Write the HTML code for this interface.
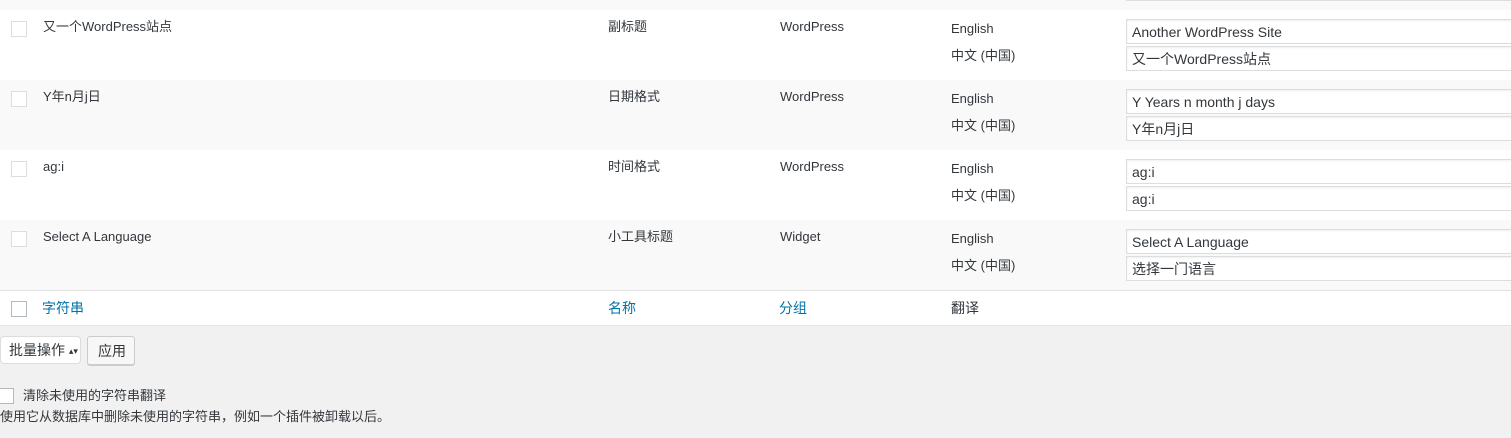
<!DOCTYPE html>
<html><head><meta charset="utf-8"><style>
*{margin:0;padding:0;box-sizing:border-box}
body{width:1511px;height:438px;background:#f1f1f1;font-family:"Liberation Sans","Noto Sans CJK SC",sans-serif;font-size:13px;line-height:16px;color:#32373c;position:relative;overflow:hidden}
.a{position:absolute;white-space:nowrap;line-height:16px}
.row{position:absolute;left:0;width:1511px;height:70px}
.cb{position:absolute;width:16px;height:16px;border:1px solid #ddd;background:#fff}
.inp{position:absolute;left:1126px;width:400px;height:25px;border:1px solid #ddd;background:#fff;font-size:14px;line-height:16px;padding:4px 5px;color:#32373c;box-shadow:inset 0 1px 2px rgba(0,0,0,.07);white-space:nowrap}
.blue{color:#0073aa;font-size:14px}
</style></head><body>
<div class="row" style="top:0;height:10px;background:#f9f9f9"></div>
<div class="inp" style="top:-24px"></div>
<div class="row" style="top:10px;background:#fff"></div>
<div class="row" style="top:80px;background:#f9f9f9"></div>
<div class="row" style="top:150px;background:#fff"></div>
<div class="row" style="top:220px;background:#f9f9f9"></div>
<div class="row" style="top:290px;height:36px;background:#fff;border-top:1px solid #e1e1e1;border-bottom:1px solid #e5e5e5"></div>

<div class="cb" style="left:11px;top:21px"></div>
<div class="a" style="left:43px;top:19px">又一个WordPress站点</div>
<div class="a" style="left:608px;top:19px">副标题</div>
<div class="a" style="left:780px;top:19px">WordPress</div>
<div class="a" style="left:951px;top:21px">English</div>
<div class="a" style="left:951px;top:48px">中文 (中国)</div>
<div class="inp" style="top:19px">Another WordPress Site</div>
<div class="inp" style="top:46px">又一个WordPress站点</div>

<div class="cb" style="left:11px;top:91px"></div>
<div class="a" style="left:43px;top:89px">Y年n月j日</div>
<div class="a" style="left:608px;top:89px">日期格式</div>
<div class="a" style="left:780px;top:89px">WordPress</div>
<div class="a" style="left:951px;top:91px">English</div>
<div class="a" style="left:951px;top:118px">中文 (中国)</div>
<div class="inp" style="top:89px">Y Years n month j days</div>
<div class="inp" style="top:116px">Y年n月j日</div>

<div class="cb" style="left:11px;top:161px"></div>
<div class="a" style="left:43px;top:159px">ag:i</div>
<div class="a" style="left:608px;top:159px">时间格式</div>
<div class="a" style="left:780px;top:159px">WordPress</div>
<div class="a" style="left:951px;top:161px">English</div>
<div class="a" style="left:951px;top:188px">中文 (中国)</div>
<div class="inp" style="top:159px">ag:i</div>
<div class="inp" style="top:186px">ag:i</div>

<div class="cb" style="left:11px;top:231px"></div>
<div class="a" style="left:43px;top:229px">Select A Language</div>
<div class="a" style="left:608px;top:229px">小工具标题</div>
<div class="a" style="left:780px;top:229px">Widget</div>
<div class="a" style="left:951px;top:231px">English</div>
<div class="a" style="left:951px;top:258px">中文 (中国)</div>
<div class="inp" style="top:229px">Select A Language</div>
<div class="inp" style="top:256px">选择一门语言</div>

<div class="cb" style="left:11px;top:301px;border-color:#b4b9be"></div>
<div class="a blue" style="left:42px;top:300px">字符串</div>
<div class="a blue" style="left:608px;top:300px">名称</div>
<div class="a blue" style="left:779px;top:300px">分组</div>
<div class="a" style="left:951px;top:300px;font-size:14px">翻译</div>

<div class="a" style="left:0;top:336px;width:81px;height:28px;background:#fff;border:1px solid #ddd;border-radius:4px;font-size:14px;padding:5px 8px;color:#32373c">批量操作 <span style="font-size:9px;position:relative;top:-1px">▴▾</span></div>
<div class="a" style="left:87px;top:336px;width:48px;height:29px;background:#f7f7f7;border:1px solid #ccc;border-radius:3px;font-size:14px;padding:6px 10px;box-shadow:0 1px 0 #ccc">应用</div>

<div class="cb" style="left:-2px;top:388px;border-color:#b4b9be"></div>
<div class="a" style="left:23px;top:388px">清除未使用的字符串翻译</div>
<div class="a" style="left:0;top:409px">使用它从数据库中删除未使用的字符串，例如一个插件被卸载以后。</div>
</body></html>
